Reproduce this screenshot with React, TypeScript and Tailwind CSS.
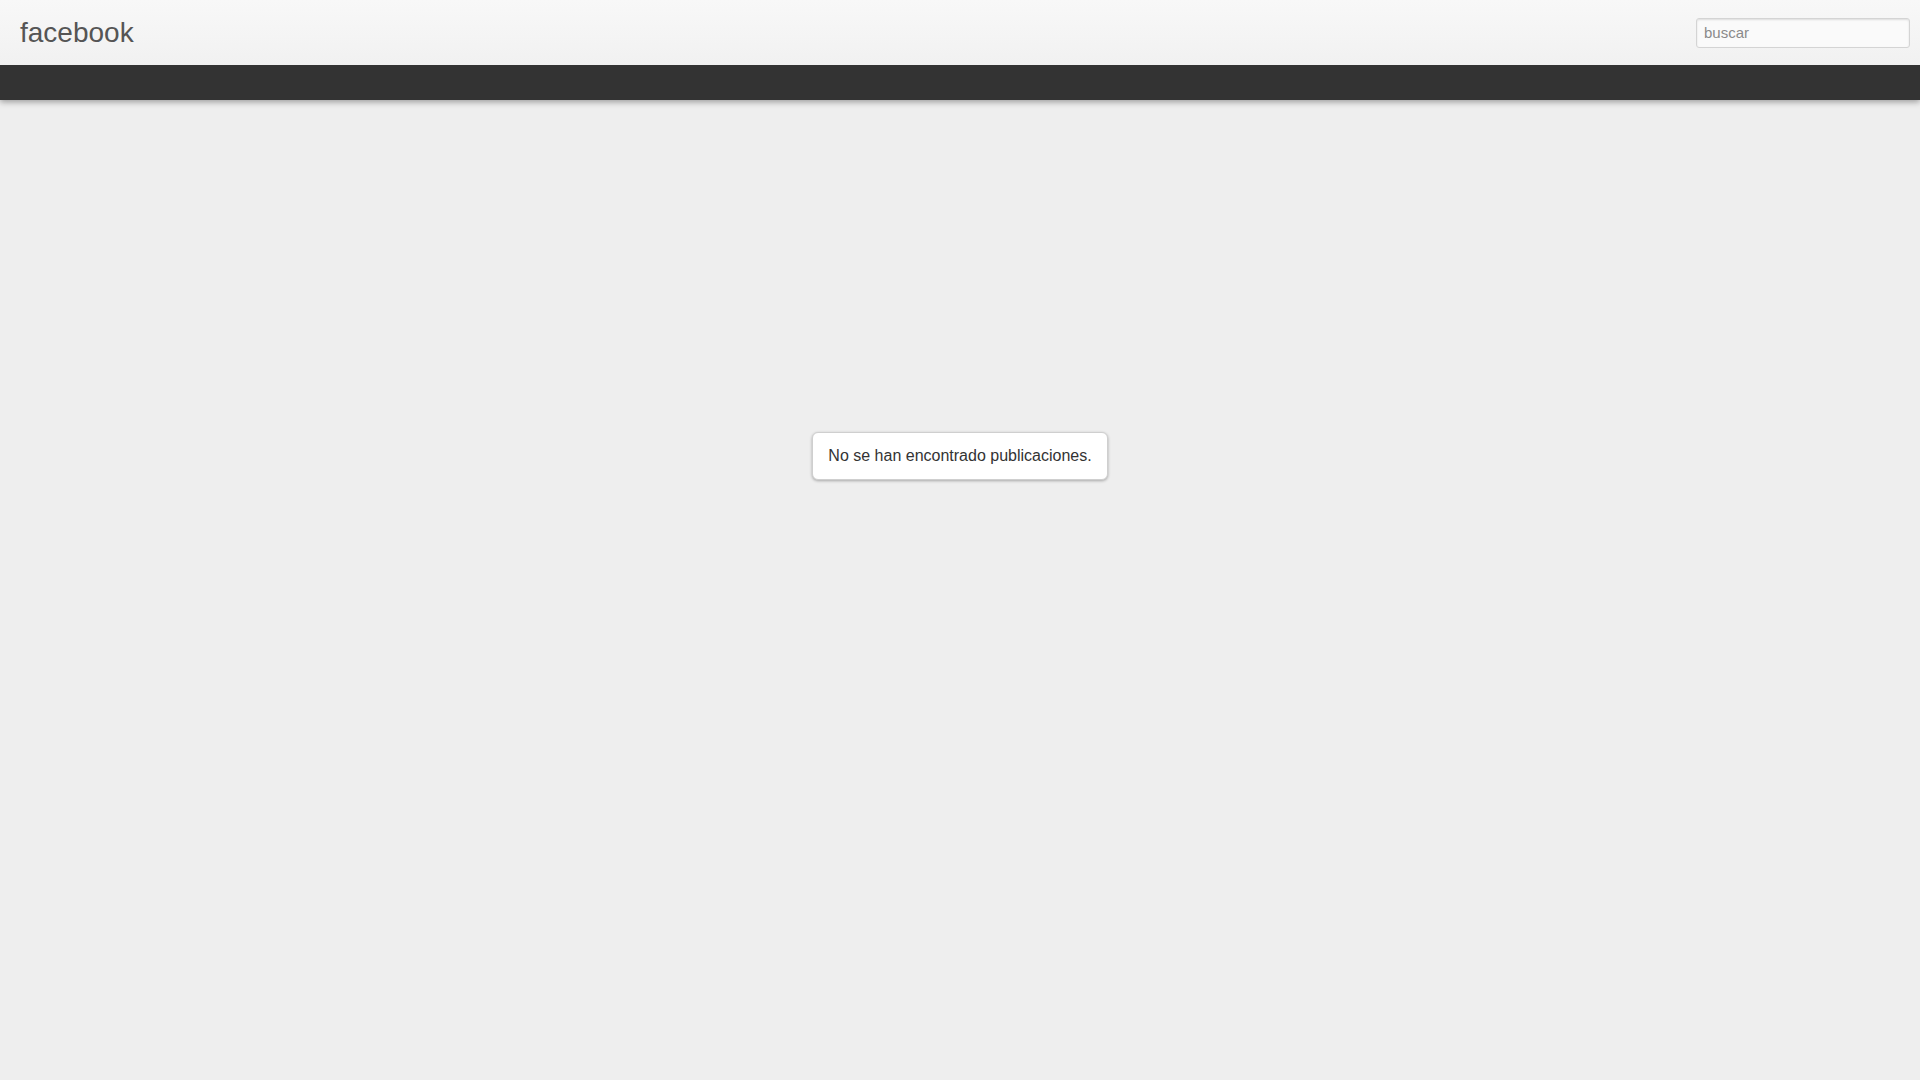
export default function App() {
  return (
    <div className="min-h-screen bg-[#eeeeee] font-['Liberation_Sans',Arial,sans-serif]">
      {/* header */}
      <header className="relative z-10 shadow-[0_2px_6px_rgba(0,0,0,0.35)]">
        <div className="flex h-[65px] items-center justify-between bg-gradient-to-b from-[#f8f8f8] to-[#f1f1f1] pl-[20px] pr-[10px]">
          <a href="#" className="text-[28px] leading-none text-[#555555] mt-[1px]">
            facebook
          </a>
          <input
            type="text"
            placeholder="buscar"
            className="h-[30px] w-[214px] rounded-[3px] border border-[#d4d4d4] bg-[#fafafa] px-[7px] text-[15px] text-[#333] placeholder:text-[#8a8a8a] shadow-[inset_0_1px_2px_rgba(0,0,0,0.12)] outline-none"
          />
        </div>
        <div className="h-[35px] bg-[#333333]" />
      </header>

      <main className="flex justify-center pt-[332px]">
        <div className="rounded-[6px] border border-[#cfcfcf] bg-white px-[15px] py-[13px] text-[16px] leading-[20px] text-[#333333] shadow-[0_1px_3px_rgba(0,0,0,0.3)]">
          No se han encontrado publicaciones.
        </div>
      </main>
    </div>
  );
}
